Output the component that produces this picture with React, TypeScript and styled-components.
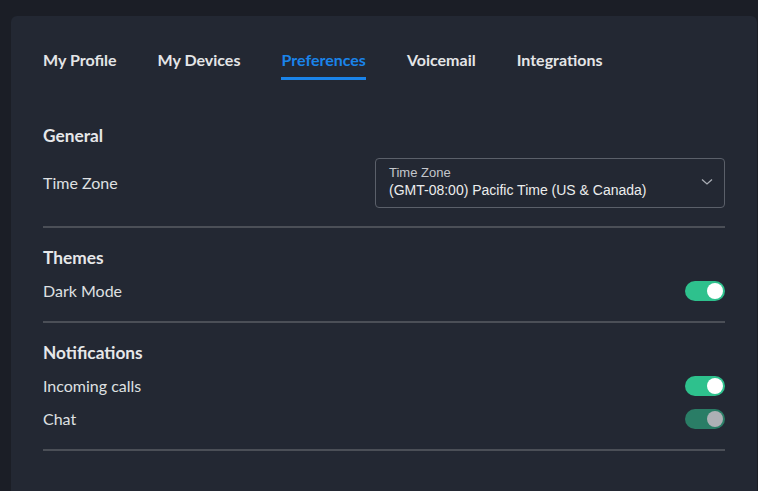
import React from "react";
import styled, { createGlobalStyle } from "styled-components";

const Global = createGlobalStyle`
  html, body { margin: 0; padding: 0; background: #1b1e26; }
  body { font-family: Lato, "Open Sans", sans-serif; overflow: hidden; }
  * { box-sizing: border-box; }
`;

const Page = styled.div`
  width: 758px;
  height: 491px;
  padding: 16px 1px 0 11px;
  background: #1b1e26;
`;

const Card = styled.div`
  height: 100%;
  background: #232833;
  border-radius: 6px 6px 0 0;
  padding: 34px 32px 0 32px;
  display: flex;
  flex-direction: column;
`;

const Tabs = styled.nav`
  display: flex;
  gap: 41px;
  margin-bottom: 46px;
`;

const Tab = styled.div<{ $active?: boolean }>`
  font-size: 16px;
  font-weight: 700;
  line-height: 20px;
  padding-bottom: 7px;
  color: ${(p) => (p.$active ? "#1a84ea" : "#e4e5e7")};
  border-bottom: 3px solid ${(p) => (p.$active ? "#1a84ea" : "transparent")};
`;

const Section = styled.section`
  display: flex;
  flex-direction: column;
  padding-bottom: 18px;
  border-bottom: 2px solid #4b4f57;
  margin-bottom: 20px;
`;

const Heading = styled.h2`
  margin: 0 0 11px;
  font-size: 17.3px;
  font-weight: 700;
  line-height: 20px;
  color: #e6e7e9;
`;

const Rows = styled.div`
  display: flex;
  flex-direction: column;
  gap: 9px;
`;

const Row = styled.div`
  display: flex;
  align-items: center;
  justify-content: space-between;
  min-height: 24px;
`;

const Label = styled.span`
  font-size: 16px;
  line-height: 20px;
  color: #dfe0e2;
`;

const Select = styled.div`
  width: 350px;
  height: 50px;
  margin-top: 1px;
  border: 1px solid #5b606a;
  border-radius: 4px;
  padding: 6px 13px 0;
  position: relative;
  font-family: "Liberation Sans", Arial, sans-serif;
`;

const SelectLabel = styled.div`
  font-size: 13px;
  line-height: 16px;
  color: #c4c7cc;
`;

const SelectValue = styled.div`
  font-size: 14px;
  line-height: 18px;
  color: #eceded;
`;

const Chevron = styled.svg`
  position: absolute;
  right: 11px;
  top: 19px;
`;

const Track = styled.div<{ $disabled?: boolean }>`
  width: 40px;
  height: 20px;
  border-radius: 10px;
  background: ${(p) => (p.$disabled ? "#2a7d66" : "#2ec18d")};
  display: flex;
  align-items: center;
  justify-content: flex-end;
  padding: 0 2px;
`;

const Knob = styled.div<{ $disabled?: boolean }>`
  width: 16px;
  height: 16px;
  border-radius: 50%;
  background: ${(p) => (p.$disabled ? "#aeb0b5" : "#ffffff")};
`;

const Toggle = ({ disabled }: { disabled?: boolean }) => (
  <Track $disabled={disabled}>
    <Knob $disabled={disabled} />
  </Track>
);

export default function App() {
  return (
    <Page>
      <Global />
      <Card>
        <Tabs>
          <Tab>My Profile</Tab>
          <Tab>My Devices</Tab>
          <Tab $active>Preferences</Tab>
          <Tab>Voicemail</Tab>
          <Tab>Integrations</Tab>
        </Tabs>

        <Section>
          <Heading>General</Heading>
          <Rows>
            <Row>
              <Label>Time Zone</Label>
              <Select>
                <SelectLabel>Time Zone</SelectLabel>
                <SelectValue>(GMT-08:00) Pacific Time (US &amp; Canada)</SelectValue>
                <Chevron width="12" height="8" viewBox="0 0 12 8">
                  <path d="M1 1.5 L6 6 L11 1.5" fill="none" stroke="#a9adb4" strokeWidth="1.3" />
                </Chevron>
              </Select>
            </Row>
          </Rows>
        </Section>

        <Section>
          <Heading>Themes</Heading>
          <Rows>
            <Row>
              <Label>Dark Mode</Label>
              <Toggle />
            </Row>
          </Rows>
        </Section>

        <Section>
          <Heading>Notifications</Heading>
          <Rows>
            <Row>
              <Label>Incoming calls</Label>
              <Toggle />
            </Row>
            <Row>
              <Label>Chat</Label>
              <Toggle disabled />
            </Row>
          </Rows>
        </Section>
      </Card>
    </Page>
  );
}
